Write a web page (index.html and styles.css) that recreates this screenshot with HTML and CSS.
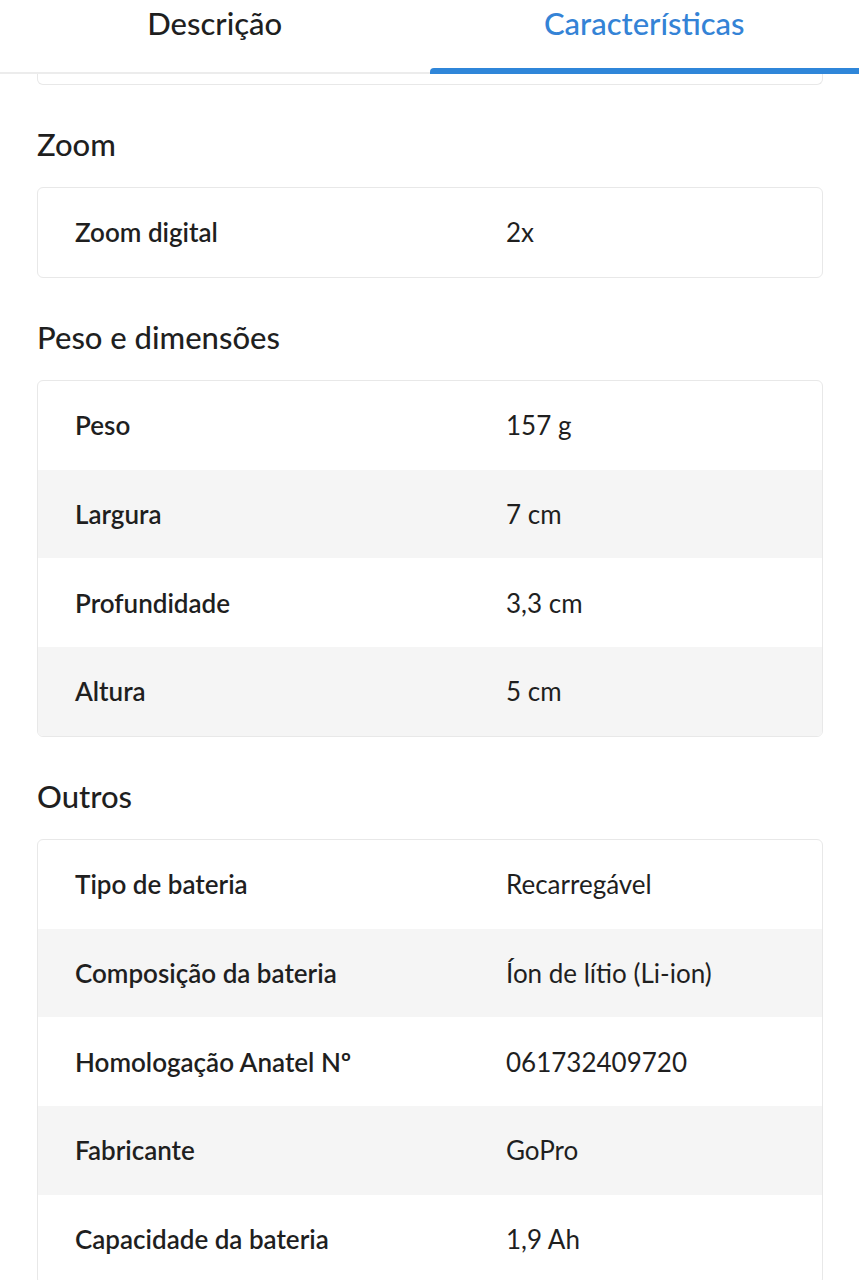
FILE: index.html
```html
<!DOCTYPE html>
<html lang="pt-BR">
<head>
<meta charset="utf-8">
<title>Características</title>
<link rel="stylesheet" href="styles.css">
</head>
<body>
<nav class="tabs">
  <div class="tab">Descrição</div>
  <div class="tab tab-active">Características</div>
</nav>
<main class="content">
  <div class="card-tail"></div>

  <h2 class="section-title">Zoom</h2>
  <div class="card">
    <div class="row"><span class="label">Zoom digital</span><span class="value">2x</span></div>
  </div>

  <h2 class="section-title">Peso e dimensões</h2>
  <div class="card">
    <div class="row"><span class="label">Peso</span><span class="value">157 g</span></div>
    <div class="row row-alt"><span class="label">Largura</span><span class="value">7 cm</span></div>
    <div class="row"><span class="label">Profundidade</span><span class="value">3,3 cm</span></div>
    <div class="row row-alt"><span class="label">Altura</span><span class="value">5 cm</span></div>
  </div>

  <h2 class="section-title">Outros</h2>
  <div class="card">
    <div class="row"><span class="label">Tipo de bateria</span><span class="value">Recarregável</span></div>
    <div class="row row-alt"><span class="label">Composição da bateria</span><span class="value">Íon de lítio (Li-ion)</span></div>
    <div class="row"><span class="label">Homologação Anatel Nº</span><span class="value">061732409720</span></div>
    <div class="row row-alt"><span class="label">Fabricante</span><span class="value">GoPro</span></div>
    <div class="row"><span class="label">Capacidade da bateria</span><span class="value">1,9 Ah</span></div>
  </div>
</main>
</body>
</html>
```
FILE: styles.css
```css
html, body {
  margin: 0;
  padding: 0;
  background: #ffffff;
}
body {
  font-family: Lato, "Liberation Sans", sans-serif;
  color: #1f1f1f;
}
.tabs {
  display: flex;
  height: 74px;
  border-bottom: 2px solid #ececec;
  box-sizing: border-box;
}
.tab {
  flex: 1 1 50%;
  display: flex;
  justify-content: center;
  padding-top: 4px;
  font-size: 31px;
  font-weight: 500;
  color: #1f1f1f;
  box-sizing: border-box;
}
.tab-active {
  color: #3483d6;
  position: relative;
}
.tab-active::after {
  content: "";
  position: absolute;
  left: 0;
  right: 0;
  bottom: -2px;
  height: 6px;
  background: #2f86d9;
  border-radius: 4px 0 0 0;
}
.content {
  padding: 0 36px 0 37px;
}
.card-tail {
  height: 10px;
  border: 1px solid #e8e8e8;
  border-top: none;
  border-radius: 0 0 6px 6px;
}
.section-title {
  margin: 42px 0 26px;
  font-size: 31px;
  line-height: 34px;
  font-weight: 500;
  color: #1f1f1f;
}
.card {
  border: 1px solid #e8e8e8;
  border-radius: 6px;
  overflow: hidden;
}
.row {
  display: grid;
  grid-template-columns: 431px 1fr;
  align-items: center;
  height: 88.75px;
  padding-left: 37px;
  font-size: 26px;
}
.row-alt {
  background: #f5f5f5;
}
.label {
  font-weight: 600;
}
.value {
  font-weight: 400;
}
```
